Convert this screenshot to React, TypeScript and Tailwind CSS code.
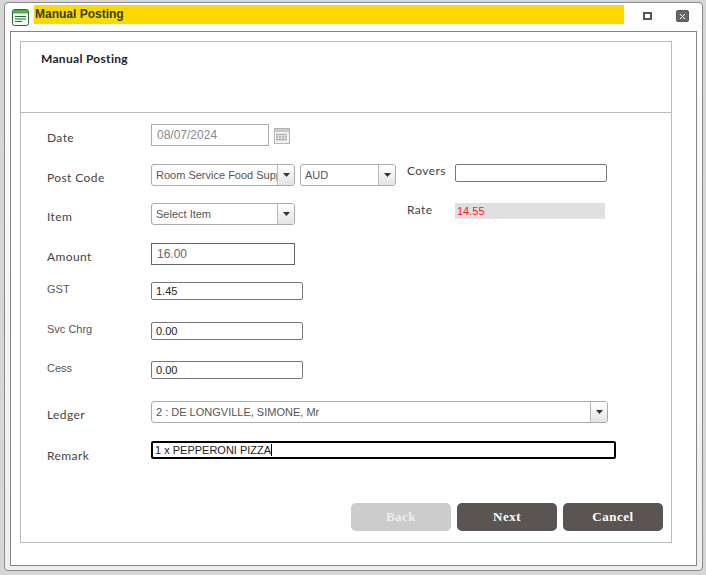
const sans = "font-['Liberation_Sans',Arial,sans-serif]"
const label = "font-['Lato',sans-serif] text-[12px] leading-[14px] text-[#444] tracking-[0.4px]"
const armLabel = "font-['Liberation_Sans',Arial,sans-serif] text-[11px] leading-[14px] text-[#555]"

function Arrow({ w = 'w-[17px]' }: { w?: string }) {
  return (
    <div className={`${w} shrink-0 flex items-center justify-center self-stretch border-l border-[#bbb] bg-gradient-to-b from-white to-[#e4e4e4]`}>
      <svg width="7" height="4" viewBox="0 0 7 4"><path d="M0 0h7L3.5 4z" fill="#333" /></svg>
    </div>
  )
}

function Select({ text, cls, color = 'text-[#555]' }: { text: string; cls: string; color?: string }) {
  return (
    <div className={`${cls} h-[22px] flex border border-[#aaa] rounded-[3px] overflow-hidden bg-white`}>
      <div className={`flex-1 min-w-0 overflow-hidden whitespace-nowrap pl-[4px] leading-[20px] text-[11px] ${color} ${sans}`}>{text}</div>
      <Arrow />
    </div>
  )
}

function Box({ value, cls = '' }: { value: string; cls?: string }) {
  return (
    <div className={`w-[152px] h-[18px] border border-[#777] rounded-[2px] pl-[4px] leading-[17px] text-[11px] text-[#222] ${sans} ${cls}`}>{value}</div>
  )
}

function CalendarIcon() {
  return (
    <svg width="16" height="16" viewBox="0 0 16 16" className="ml-[5px] mt-[4px]">
      <rect x="0.5" y="0.5" width="15" height="15" fill="#f4f4f4" stroke="#b5b5b5" />
      <rect x="1" y="1" width="14" height="3" fill="#c9c9c9" />
      <path d="M3 5.5v8M6 5.5v8M9 5.5v8M12 5.5v8M2 6.5h11M2 9h11M2 11.5h11" stroke="#b0b0b0" strokeWidth="1" fill="none" />
    </svg>
  )
}

function AppIcon() {
  return (
    <svg width="17" height="17" viewBox="0 0 17 17" className="shrink-0">
      <rect x="0.5" y="0.5" width="16" height="16" rx="2" fill="#f6fbf4" stroke="#1f6b32" />
      <rect x="1" y="1" width="15" height="3.5" fill="#4caf50" />
      <path d="M3 7.5h11M3 10h11M3 12.5h7" stroke="#1f6b32" strokeWidth="1.2" />
    </svg>
  )
}

export default function App() {
  return (
    <div className="w-[706px] h-[575px] bg-[#d6d6d6] pt-[2px] pl-[4px] overflow-hidden">
      <div className="w-[699px] h-[569px] flex flex-col border border-[#8a8a8a] rounded-[4px] bg-gradient-to-b from-white to-[#eeeeee] bg-[#f0f0f0] pl-[5px] pr-[5px] pb-[4px]">
        {/* title bar */}
        <div className="h-[28px] shrink-0 flex items-center pl-[2px]">
          <AppIcon />
          <div className={`ml-[5px] mb-[6px] w-[590px] h-[19px] bg-[#ffd800] pl-[1px] leading-[19px] text-[12px] font-bold text-[#2f3f1c] ${sans}`}>Manual Posting</div>
          <div className="ml-[19px] mb-[2px] w-[9px] h-[8px] border-2 border-[#555]" />
          <div className="ml-[24px] mb-[2px] w-[13px] h-[12px] rounded-[2px] bg-[#666] border border-[#555] flex items-center justify-center">
            <svg width="7" height="7" viewBox="0 0 7 7"><path d="M1 1l5 5M6 1L1 6" stroke="#fff" strokeWidth="1" /></svg>
          </div>
        </div>

        {/* window body */}
        <div className="flex-1 border border-[#7d878c] bg-white pt-[9px] pl-[9px]">
          <div className="w-[652px] h-[502px] border border-[#bbb]">
            <div className="h-[71px] border-b border-[#bbb] pt-[10px] pl-[20px]">
              <div className="font-['Lato',sans-serif] text-[12px] leading-[14px] font-bold text-[#222] tracking-[0.3px]">Manual Posting</div>
            </div>

            <div className="pl-[26px] pt-[11px]">
              <div className="flex h-[22px]">
                <div className={`w-[104px] pt-[7px] ${label}`}>Date</div>
                <div className={`w-[118px] h-[22px] border border-[#aaa] pl-[5px] leading-[20px] text-[12px] text-[#888] ${sans}`}>08/07/2024</div>
                <CalendarIcon />
              </div>

              <div className="flex h-[22px] mt-[18px]">
                <div className={`w-[104px] pt-[7px] ${label}`}>Post Code</div>
                <Select text="Room Service Food Supplies" cls="w-[144px]" />
                <Select text="AUD" cls="w-[96px] ml-[5px]" />
                <div className={`w-[48px] ml-[11px] pt-[0px] ${label}`}>Covers</div>
                <div className="w-[152px] h-[18px] border border-[#777] rounded-[2px]" />
              </div>

              <div className="flex h-[22px] mt-[17px]">
                <div className={`w-[104px] pt-[7px] ${label}`}>Item</div>
                <Select text="Select Item" cls="w-[144px]" />
                <div className={`w-[48px] ml-[112px] ${label}`}>Rate</div>
                <div className={`w-[150px] h-[16px] bg-[#e0e0e0] pl-[2px] leading-[17px] text-[11px] text-[#ff2020] ${sans}`}>14.55</div>
              </div>

              <div className="flex h-[22px] mt-[18px]">
                <div className={`w-[104px] pt-[7px] ${label}`}>Amount</div>
                <div className={`w-[144px] h-[22px] border border-[#666] pl-[5px] leading-[20px] text-[12px] text-[#666] ${sans}`}>16.00</div>
              </div>

              <div className="flex h-[18px] mt-[17px]">
                <div className={`w-[104px] ${armLabel}`}>GST</div>
                <Box value="1.45" />
              </div>
              <div className="flex h-[18px] mt-[22px]">
                <div className={`w-[104px] ${armLabel}`}>Svc Chrg</div>
                <Box value="0.00" />
              </div>
              <div className="flex h-[18px] mt-[21px]">
                <div className={`w-[104px] ${armLabel}`}>Cess</div>
                <Box value="0.00" />
              </div>

              <div className="flex h-[22px] mt-[22px]">
                <div className={`w-[104px] pt-[7px] ${label}`}>Ledger</div>
                <Select text="2 : DE LONGVILLE, SIMONE, Mr" cls="w-[457px]" />
              </div>

              <div className="flex h-[18px] mt-[18px]">
                <div className={`w-[104px] pt-[8px] ${label}`}>Remark</div>
                <div className={`w-[465px] h-[18px] border-2 border-black rounded-[2px] pl-[2px] leading-[15px] text-[11px] text-[#222] whitespace-nowrap ${sans}`}>
                  <span className="border-r border-black">1 x PEPPERONI PIZZA</span>
                </div>
              </div>

              <div className="flex justify-end gap-[6px] mt-[44px] pr-[8px]">
                <button className={`w-[100px] h-[28px] rounded-[5px] bg-[#cccccc] text-[#eeeeee] text-[13px] font-bold font-['Liberation_Serif',serif] tracking-[0.5px]`}>Back</button>
                <button className={`w-[100px] h-[28px] rounded-[5px] bg-[#5a5553] text-white text-[13px] font-bold font-['Liberation_Serif',serif] tracking-[0.5px]`}>Next</button>
                <button className={`w-[100px] h-[28px] rounded-[5px] bg-[#5a5553] text-white text-[13px] font-bold font-['Liberation_Serif',serif] tracking-[0.5px]`}>Cancel</button>
              </div>
            </div>
          </div>
        </div>
      </div>
    </div>
  )
}
